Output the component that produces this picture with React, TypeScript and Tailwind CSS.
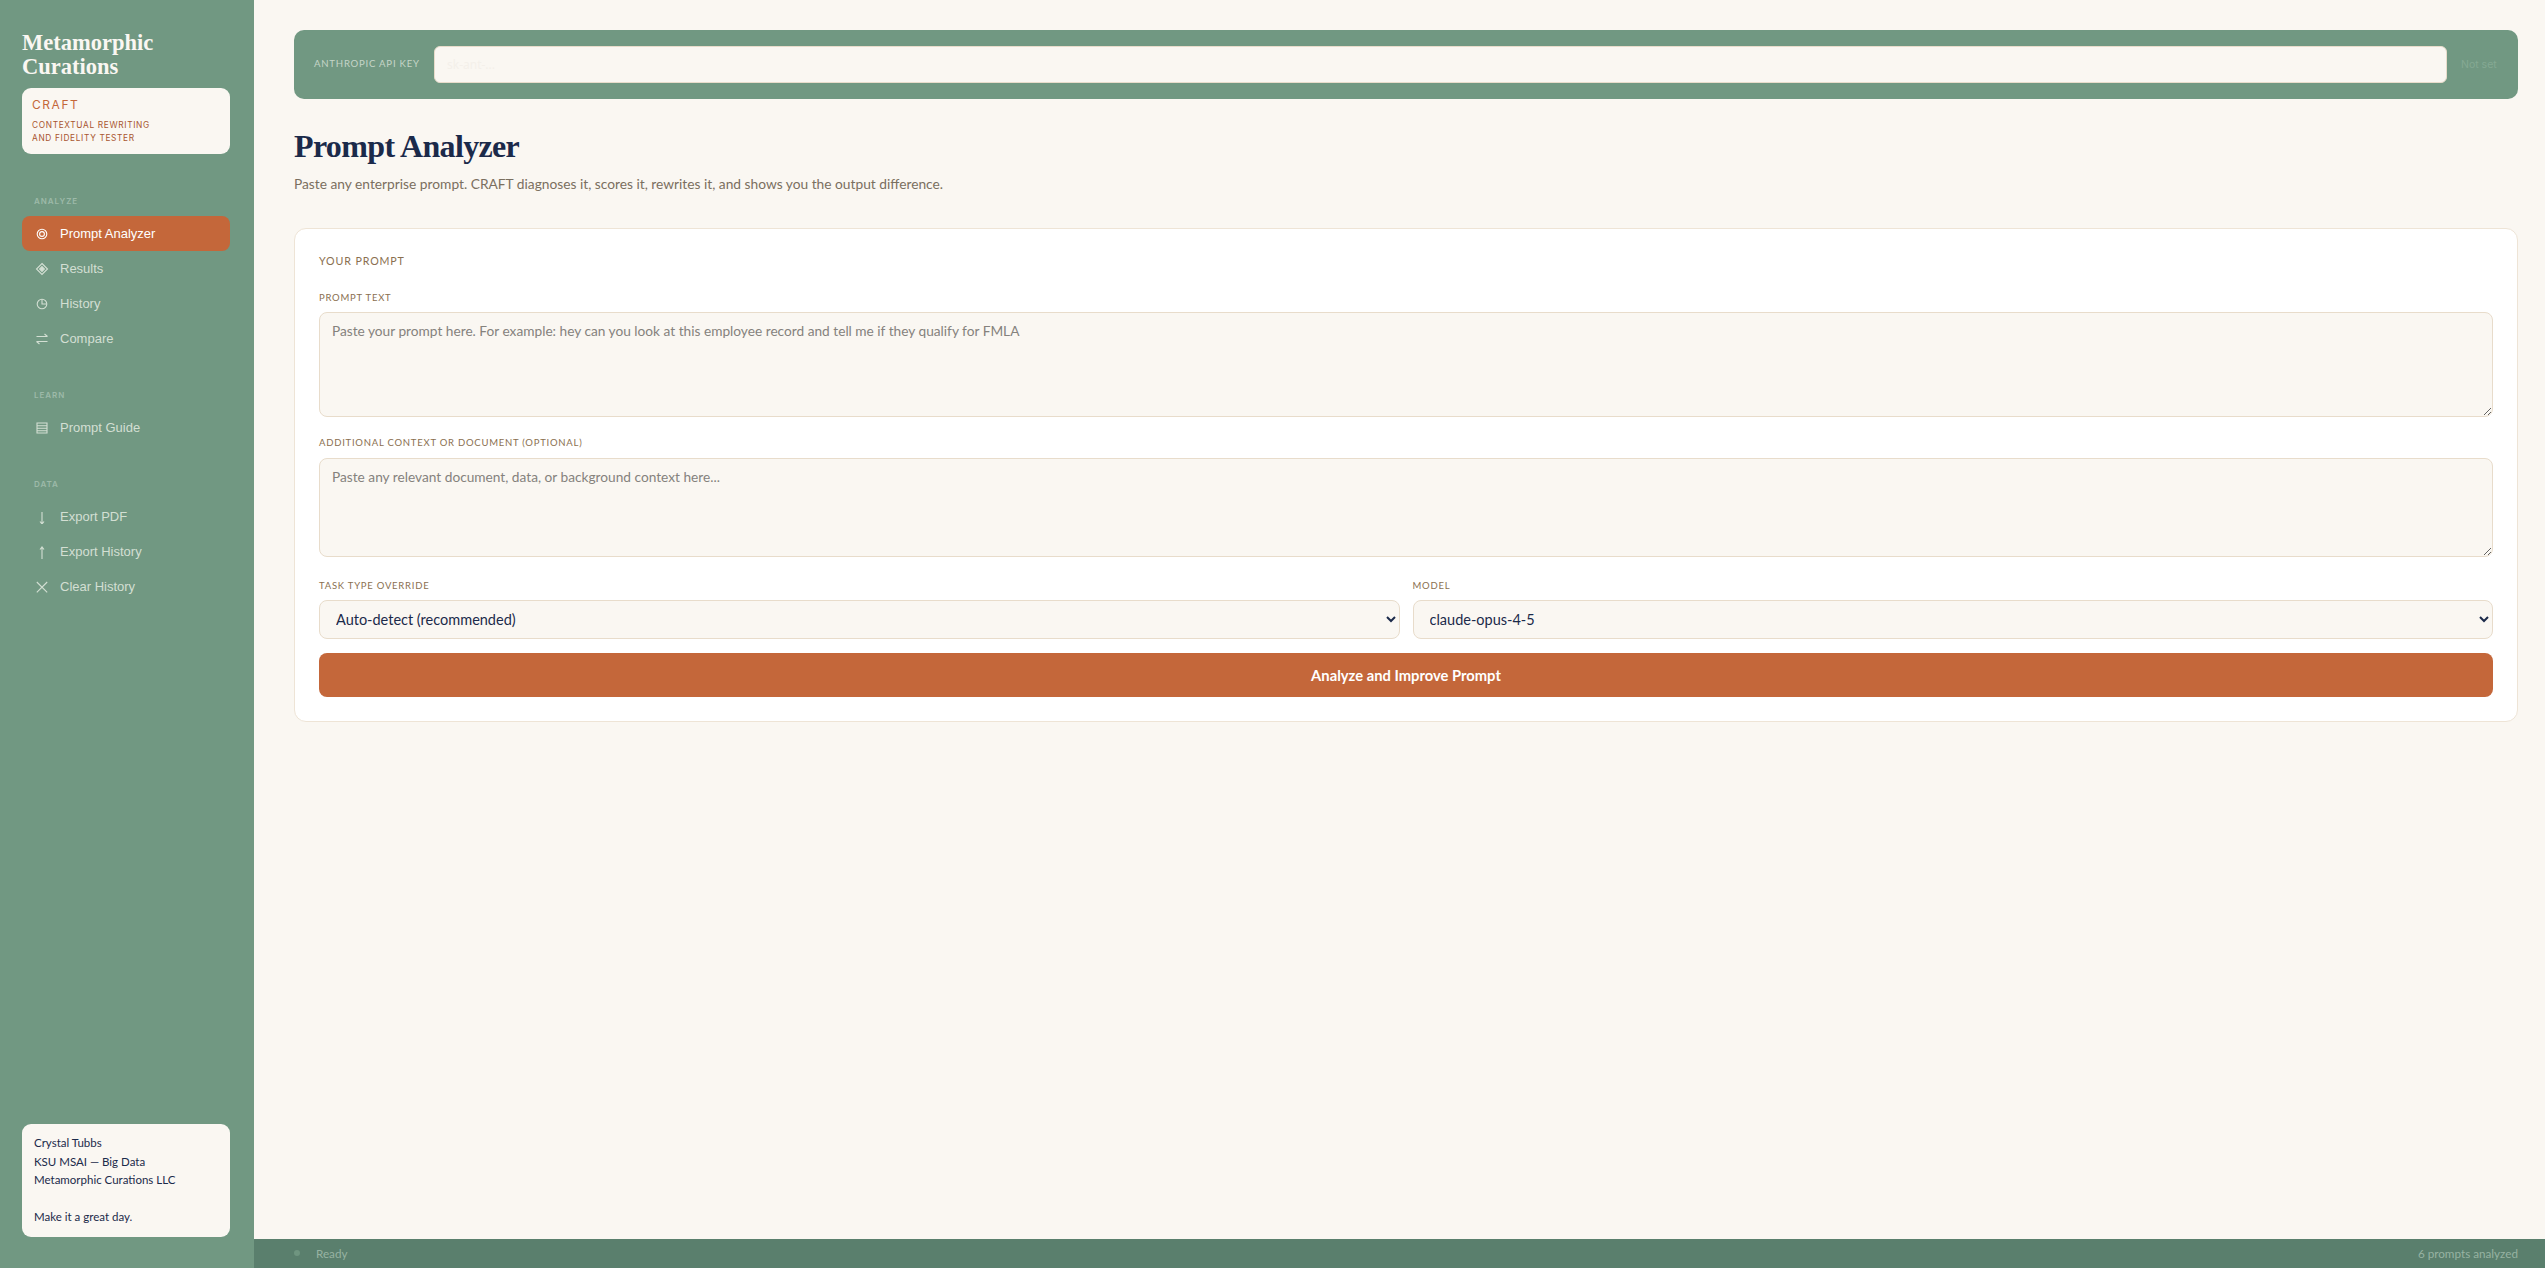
import type { ReactNode } from 'react'

const icons: Record<string, ReactNode> = {
  target: (
    <>
      <circle cx="7" cy="7" r="4.8" />
      <circle cx="7" cy="7" r="2.4" />
    </>
  ),
  diamond: (
    <>
      <path d="M7 1.5 12.5 7 7 12.5 1.5 7Z" />
      <path d="M7 4.6 9.4 7 7 9.4 4.6 7Z" fill="currentColor" />
    </>
  ),
  clock: (
    <>
      <circle cx="7" cy="7" r="4.8" />
      <path d="M7 2.2V7H11.8" />
    </>
  ),
  swap: <path d="M1.5 4.5H12.5M9.5 2 12.5 4.5M12.5 9.5H1.5M4.5 12 1.5 9.5" />,
  list: <path d="M2 2H12V12H2ZM2 4.7H12M2 7.3H12M2 9.8H12" />,
  down: <path d="M7 2V14M5 11.5 7 14 9 11.5" />,
  up: <path d="M7 14V2M5 4.5 7 2 9 4.5" />,
  cross: <path d="M1.8 2 12.2 12.4M12.2 2 1.8 12.4" />,
}

const navGroups = [
  {
    title: 'ANALYZE',
    cls: 'mt-[42px]',
    items: [
      { icon: 'target', label: 'Prompt Analyzer', active: true },
      { icon: 'diamond', label: 'Results' },
      { icon: 'clock', label: 'History' },
      { icon: 'swap', label: 'Compare' },
    ],
  },
  {
    title: 'LEARN',
    cls: 'mt-[34px]',
    items: [{ icon: 'list', label: 'Prompt Guide' }],
  },
  {
    title: 'DATA',
    cls: 'mt-[34px]',
    items: [
      { icon: 'down', label: 'Export PDF' },
      { icon: 'up', label: 'Export History' },
      { icon: 'cross', label: 'Clear History' },
    ],
  },
]

function Sidebar() {
  return (
    <aside className="w-[254px] shrink-0 bg-[#719882] pl-[22px] pr-[24px] pt-[31px] pb-[31px] flex flex-col">
      <h1 className="font-['Liberation_Serif',serif] font-bold text-[22.5px] leading-[24px] text-[#faf7f2]">
        Metamorphic
        <br />
        Curations
      </h1>
      <div className="mt-[9px] h-[66px] rounded-[9px] bg-[#faf7f2] px-[10px] pt-[9px]">
        <div className="font-['Inter',sans-serif] text-[12px] leading-[16px] tracking-[0.13em] text-[#c4673a]">CRAFT</div>
        <div className="mt-[6px] font-['Inter',sans-serif] text-[8.3px] leading-[13px] tracking-[0.08em] text-[#a8552f]">
          CONTEXTUAL REWRITING
          <br />
          AND FIDELITY TESTER
        </div>
      </div>

      {navGroups.map((group) => (
        <div key={group.title} className={group.cls}>
          <div className="pl-3 font-['Inter',sans-serif] font-semibold text-[8px] leading-[10px] tracking-[0.12em] text-[#9dbaa9] mb-[10px]">
            {group.title}
          </div>
          {group.items.map((item) => (
            <button
              key={item.label}
              className={`w-full h-[35px] flex items-center rounded-[8px] pl-[13px] text-left font-['Liberation_Sans',sans-serif] text-[13px] ${
                item.active ? 'bg-[#c4673a] text-white' : 'text-[#d3dfd3]'
              }`}
            >
              <svg viewBox="0 0 14 14" fill="none" stroke="currentColor" strokeWidth="1.1" className="size-[14px] mr-[11px] shrink-0">
                {icons[item.icon]}
              </svg>
              {item.label}
            </button>
          ))}
        </div>
      ))}

      <div className="mt-auto h-[113px] rounded-[9px] bg-[#faf7f2] px-3 pt-[10px] font-['Lato',sans-serif] text-[11.5px] leading-[18.5px] text-[#1b2a4a]">
        <div>Crystal Tubbs</div>
        <div>KSU MSAI — Big Data</div>
        <div>Metamorphic Curations LLC</div>
        <div className="mt-[18.5px]">Make it a great day.</div>
      </div>
    </aside>
  )
}

function FieldLabel({ children }: { children: string }) {
  return (
    <label className="block font-['Lato',sans-serif] text-[9.5px] leading-[12px] tracking-[0.08em] text-[#8a6f50] mb-[8px]">
      {children}
    </label>
  )
}

export default function App() {
  const fieldCls =
    "block w-full rounded-[8px] border border-[#e8dccb] bg-[#faf7f2] font-['Lato',sans-serif] text-[#1b2a4a] placeholder:text-[#85827d] outline-none"

  return (
    <div className="h-screen flex overflow-hidden bg-[#faf7f2]">
      <Sidebar />

      <div className="flex-1 min-w-0 flex flex-col">
        <main className="flex-1 pl-10 pr-[27px] pt-[30px]">
          {/* api key bar */}
          <div className="h-[69px] rounded-[10px] bg-[#719882] flex items-center pl-5 pr-[20px]">
            <span className="w-[120px] shrink-0 font-['Lato',sans-serif] text-[9.6px] tracking-[0.08em] text-[#c5d5c8]">
              ANTHROPIC API KEY
            </span>
            <input
              type="password"
              placeholder="sk-ant-..."
              className="flex-1 h-[37px] rounded-[6px] border border-[#e8dccb] bg-[#faf7f2] px-3 text-[12px] placeholder:text-[#f4f0ea] outline-none"
            />
            <span className="ml-[14px] w-[37px] shrink-0 font-['Inter',sans-serif] text-[10.5px] text-[#85a993] whitespace-nowrap">
              Not set
            </span>
          </div>

          <h2 className="mt-[29px] font-['Liberation_Serif',serif] font-bold text-[32px] leading-[36px] tracking-[-0.65px] text-[#1b2a4a]">
            Prompt Analyzer
          </h2>
          <p className="mt-[10px] font-['Lato',sans-serif] text-[13.75px] leading-[20px] text-[#7a6f60]">
            Paste any enterprise prompt. CRAFT diagnoses it, scores it, rewrites it, and shows you the output difference.
          </p>

          {/* form card */}
          <section className="mt-[34px] h-[494px] rounded-[12px] border border-[#eee4d6] bg-white p-6">
            <div className="mt-[1px] font-['Lato',sans-serif] text-[10.7px] leading-[14px] tracking-[0.08em] text-[#8a6f50] mb-[24px]">
              YOUR PROMPT
            </div>

            <FieldLabel>PROMPT TEXT</FieldLabel>
            <textarea
              className={`${fieldCls} h-[105px] px-3 py-[8px] text-[13.7px]`}
              placeholder="Paste your prompt here. For example: hey can you look at this employee record and tell me if they qualify for FMLA"
            />

            <div className="mt-[20px]">
              <FieldLabel>ADDITIONAL CONTEXT OR DOCUMENT (OPTIONAL)</FieldLabel>
              <textarea
                className={`${fieldCls} mt-[9px] h-[99px] px-3 py-[8px] text-[13.7px]`}
                placeholder="Paste any relevant document, data, or background context here..."
              />
            </div>

            <div className="mt-[23px] grid grid-cols-2 gap-[13px]">
              <div>
                <FieldLabel>TASK TYPE OVERRIDE</FieldLabel>
                <select className={`${fieldCls} h-[39px] px-3 text-[14.5px]`} defaultValue="auto">
                  <option value="auto">Auto-detect (recommended)</option>
                </select>
              </div>
              <div>
                <FieldLabel>MODEL</FieldLabel>
                <select className={`${fieldCls} h-[39px] px-3 text-[14.5px]`} defaultValue="opus">
                  <option value="opus">claude-opus-4-5</option>
                </select>
              </div>
            </div>

            <button className="mt-[14px] w-full h-[44px] rounded-[8px] bg-[#c4673a] font-['Lato',sans-serif] font-bold text-[14.75px] text-white">
              Analyze and Improve Prompt
            </button>
          </section>
        </main>

        <footer className="h-[29px] shrink-0 bg-[#5a7f6d] flex items-center justify-between pl-10 pr-[27px] font-['Lato',sans-serif] text-[11.7px] text-[#97b3a2]">
          <div className="flex items-center">
            <span className="size-[6px] rounded-full bg-[#6f9580] mr-[16px]" />
            Ready
          </div>
          <span>6 prompts analyzed</span>
        </footer>
      </div>
    </div>
  )
}
